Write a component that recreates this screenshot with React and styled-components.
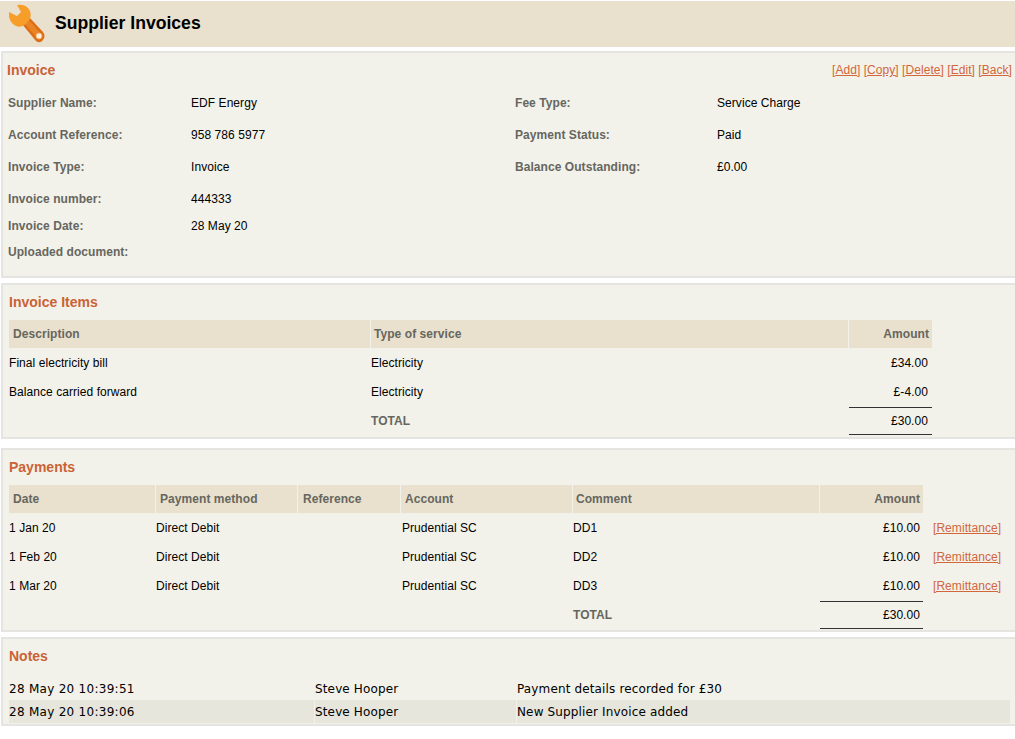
import React from "react";
import styled, { createGlobalStyle } from "styled-components";

const Global = createGlobalStyle`
  html, body { margin: 0; padding: 0; background: #fff; }
  body { font-family: "Liberation Sans", Arial, sans-serif; font-size: 12px; letter-spacing: 0.06px; color: #000; overflow: hidden; }
  * { box-sizing: border-box; }
`;

const Page = styled.div`
  width: 1015px;
  height: 739px;
  padding-top: 1px;
  overflow: hidden;
`;
const TitleBar = styled.header`
  height: 46px;
  background: #e9e1cd;
  display: flex;
  align-items: center;
  gap: 8px;
  padding-left: 7px;
  margin-bottom: 4px;
`;
const Title = styled.h1`
  margin: 0 0 2px;
  font-size: 17.6px;
  font-weight: 700;
  letter-spacing: 0;
  line-height: 44px;
`;
const Panel = styled.section`
  margin: 0 0 ${p => p.$gap}px 1px;
  width: 1016px;
  height: ${p => p.$h}px;
  background: #f3f2ea;
  border: 2px solid #e4e4e0;
  border-right: 0;
  padding-left: ${p => p.$pl}px;
`;
const PanelHead = styled.div`
  display: flex;
  justify-content: space-between;
  align-items: center;
  height: ${p => p.$h}px;
  padding: 0 5px ${p => p.$pb || 0}px 0;
`;
const Heading = styled.h2`
  margin: 0;
  font-size: 14px;
  font-weight: 700;
  letter-spacing: 0;
  line-height: 18px;
  color: #ca6236;
`;
const Actions = styled.nav`
  display: flex;
  gap: 3.3px;
`;
const Link = styled.a`
  color: #d2663c;
  text-decoration: underline;
  cursor: pointer;
`;
const Table = styled.table`
  border-collapse: separate;
  border-spacing: 0;
  table-layout: fixed;
  width: ${p => p.$w}px;
`;
const InfoRow = styled.tr`
  height: ${p => p.$h}px;
`;
const Label = styled.th`
  padding: 0 0 0 ${p => p.$pl || 0}px;
  text-align: left;
  font-weight: 700;
  color: #666660;
`;
const Value = styled.td`
  padding: 0;
`;
const HeadRow = styled.tr`
  height: 28px;
`;
const Hcell = styled.th`
  background: #e9e1cd;
  border-right: 1px solid #f3f2ea;
  padding: 0 ${p => (p.$right ? 3 : 0)}px 0 ${p => p.$pl ?? 4}px;
  text-align: ${p => (p.$right ? "right" : "left")};
  font-weight: 700;
  color: #666660;
  &:last-child { border-right: 0; }
`;
const AmountHead = styled(Hcell)`
  border-right: 0;
`;
const BodyRow = styled.tr`
  height: ${p => p.$h || 29}px;
`;
const Cell = styled.td`
  padding: 0 ${p => (p.$right ? p.$pr ?? 4 : 0)}px 0 ${p => p.$pl || 0}px;
  text-align: ${p => (p.$right ? "right" : "left")};
  white-space: nowrap;
`;
const TotalLabel = styled.td`
  padding: 0;
  font-weight: 700;
  color: #666660;
`;
const TotalAmount = styled.td`
  padding: 0 ${p => p.$pr ?? 4}px 0 0;
  text-align: right;
  border-top: 1px solid #333;
  border-bottom: 1px solid #333;
`;
const NotesTable = styled.table`
  border-collapse: separate;
  border-spacing: 0;
  table-layout: fixed;
  width: 1001px;
  font-family: "DejaVu Sans", Verdana, sans-serif;
  font-size: 12px;
`;
const NoteRow = styled.tr`
  height: 23px;
  background: ${p => (p.$alt ? "#e6e6dd" : "transparent")};
`;
const NoteStamp = styled.td`
  padding: 0;
  border-right: 1px solid #f3f2ea;
  white-space: nowrap;
  letter-spacing: 0.28px;
`;
const NoteCell = styled.td`
  padding: 0;
  border-right: 1px solid #f3f2ea;
  white-space: nowrap;
  letter-spacing: 0.14px;
  &:last-child { border-right: 0; }
`;

const Wrench = () => (
  <svg width="40" height="42" viewBox="0 0 40 42" aria-hidden="true">
    <path d="M15 21 L29 38 Q33 41 36 37 Q39 33 36 29 L22 14 Z" fill="#dc6e18" />
    <path d="M18 21 L30 35 L34 31 L22 17 Z" fill="#ea8424" />
    <path d="M2 9 L10 13 L14 9 L10 2 Q17 1 21 5 Q25 9 23 16 L19 21 Q14 25 9 23 Q1 19 2 9 Z" fill="#f79d2a" />
    <circle cx="32" cy="33" r="3" fill="#fdf0dc" stroke="#f3b06a" strokeWidth="1" />
  </svg>
);

const invoiceRows = [
  [32, "Supplier Name:", "EDF Energy", "Fee Type:", "Service Charge"],
  [32, "Account Reference:", "958 786 5977", "Payment Status:", "Paid"],
  [32, "Invoice Type:", "Invoice", "Balance Outstanding:", "£0.00"],
  [32, "Invoice number:", "444333"],
  [22, "Invoice Date:", "28 May 20"],
  [30, "Uploaded document:", ""],
];

const payments = [
  ["1 Jan 20", "DD1", 29],
  ["1 Feb 20", "DD2", 29],
  ["1 Mar 20", "DD3", 30],
];

export default function App() {
  return (
    <Page>
      <Global />
      <TitleBar>
        <Wrench />
        <Title>Supplier Invoices</Title>
      </TitleBar>

      <Panel $h={227} $gap={5} $pl={4}>
        <PanelHead $h={34}>
          <Heading>Invoice</Heading>
          <Actions>
            {["Add", "Copy", "Delete", "Edit", "Back"].map(a => (
              <Link key={a}>[{a}]</Link>
            ))}
          </Actions>
        </PanelHead>
        <Table $w={1010}>
          <colgroup>
            <col width="184" />
            <col width="324" />
            <col width="202" />
            <col />
          </colgroup>
          <tbody>
            {invoiceRows.map(([h, a, b, c, d]) => (
              <InfoRow key={a} $h={h}>
                <Label $pl={1}>{a}</Label>
                <Value>{b}</Value>
                <Label>{c}</Label>
                <Value>{d}</Value>
              </InfoRow>
            ))}
          </tbody>
        </Table>
      </Panel>

      <Panel $h={156} $gap={9} $pl={6}>
        <PanelHead $h={35} $pb={2}>
          <Heading>Invoice Items</Heading>
        </PanelHead>
        <Table $w={923}>
          <colgroup>
            <col width="362" />
            <col width="478" />
            <col width="83" />
          </colgroup>
          <tbody>
            <HeadRow>
              <Hcell>Description</Hcell>
              <Hcell $pl={3}>Type of service</Hcell>
              <Hcell $right>Amount</Hcell>
            </HeadRow>
            <BodyRow>
              <Cell>Final electricity bill</Cell>
              <Cell>Electricity</Cell>
              <Cell $right>£34.00</Cell>
            </BodyRow>
            <BodyRow $h={30}>
              <Cell>Balance carried forward</Cell>
              <Cell>Electricity</Cell>
              <Cell $right>£-4.00</Cell>
            </BodyRow>
            <BodyRow $h={28}>
              <Cell />
              <TotalLabel>TOTAL</TotalLabel>
              <TotalAmount>£30.00</TotalAmount>
            </BodyRow>
          </tbody>
        </Table>
      </Panel>

      <Panel $h={184} $gap={5} $pl={6}>
        <PanelHead $h={35} $pb={2}>
          <Heading>Payments</Heading>
        </PanelHead>
        <Table $w={1005}>
          <colgroup>
            <col width="147" />
            <col width="142" />
            <col width="103" />
            <col width="172" />
            <col width="247" />
            <col width="103" />
            <col width="91" />
          </colgroup>
          <tbody>
            <HeadRow>
              <Hcell>Date</Hcell>
              <Hcell>Payment method</Hcell>
              <Hcell $pl={5}>Reference</Hcell>
              <Hcell>Account</Hcell>
              <Hcell $pl={3}>Comment</Hcell>
              <AmountHead $right>Amount</AmountHead>
              <Cell />
            </HeadRow>
            {payments.map(([date, comment, h]) => (
              <BodyRow key={date} $h={h}>
                <Cell>{date}</Cell>
                <Cell>Direct Debit</Cell>
                <Cell />
                <Cell $pl={1}>Prudential SC</Cell>
                <Cell>{comment}</Cell>
                <Cell $right $pr={3}>£10.00</Cell>
                <Cell $pl={10}>
                  <Link>[Remittance]</Link>
                </Cell>
              </BodyRow>
            ))}
            <BodyRow $h={28}>
              <Cell />
              <Cell />
              <Cell />
              <Cell />
              <TotalLabel>TOTAL</TotalLabel>
              <TotalAmount $pr={3}>£30.00</TotalAmount>
              <Cell />
            </BodyRow>
          </tbody>
        </Table>
      </Panel>

      <Panel $h={89} $gap={0} $pl={6}>
        <PanelHead $h={38} $pb={5}>
          <Heading>Notes</Heading>
        </PanelHead>
        <NotesTable>
          <colgroup>
            <col width="306" />
            <col width="202" />
            <col />
          </colgroup>
          <tbody>
            <NoteRow>
              <NoteStamp>28 May 20 10:39:51</NoteStamp>
              <NoteCell>Steve Hooper</NoteCell>
              <NoteCell>Payment details recorded for £30</NoteCell>
            </NoteRow>
            <NoteRow $alt>
              <NoteStamp>28 May 20 10:39:06</NoteStamp>
              <NoteCell>Steve Hooper</NoteCell>
              <NoteCell>New Supplier Invoice added</NoteCell>
            </NoteRow>
          </tbody>
        </NotesTable>
      </Panel>
    </Page>
  );
}
